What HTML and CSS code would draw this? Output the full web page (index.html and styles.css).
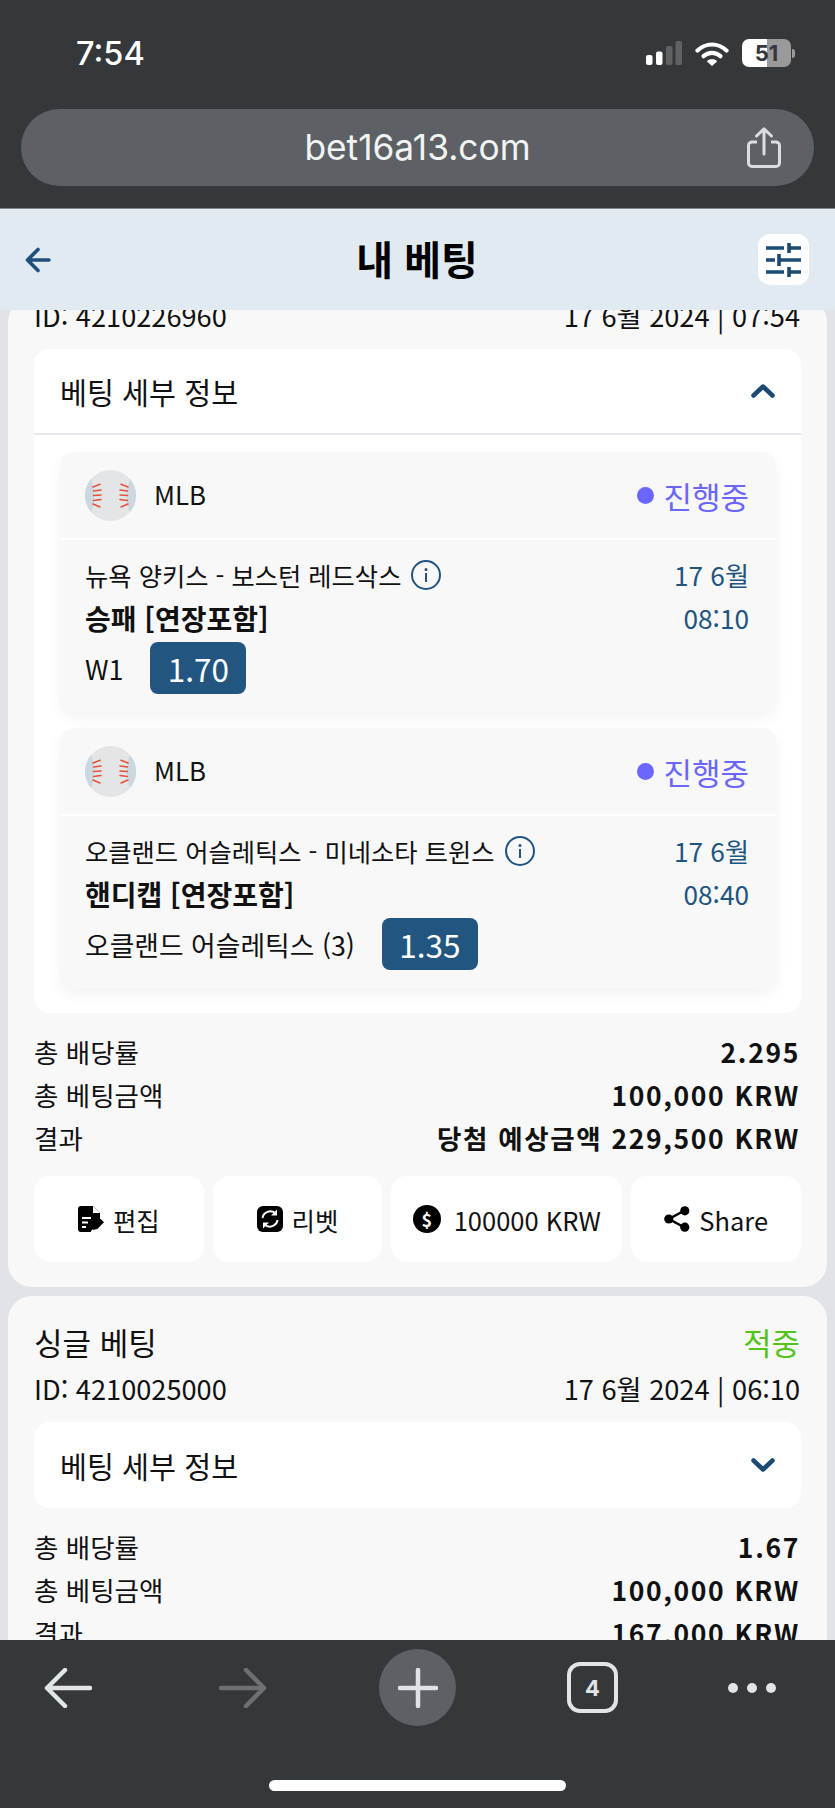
FILE: index.html
```html
<!DOCTYPE html>
<html lang="ko">
<head>
<meta charset="utf-8">
<title>내 베팅</title>
<link rel="stylesheet" href="styles.css">
</head>
<body>
<div class="phone">
  <div class="chrome">
    <div class="status">
      <span class="clock">7:54</span>
      <div class="status-icons">
        <svg class="signal" viewBox="0 0 36 24"><rect x="0" y="14" width="6.5" height="10" rx="2" fill="#fff"/><rect x="10" y="10.5" width="6.5" height="13.5" rx="2" fill="#fff"/><rect x="20" y="5" width="6.5" height="19" rx="2" fill="#5f6265"/><rect x="29.5" y="0" width="6.5" height="24" rx="2" fill="#5f6265"/></svg>
        <svg class="wifi" viewBox="0 0 34 25"><path d="M2.5 9.5C11 1.5 23 1.5 31.5 9.5" fill="none" stroke="#fff" stroke-width="4.2" stroke-linecap="round"/><path d="M8.5 15.2C13.5 10.8 20.5 10.8 25.5 15.2" fill="none" stroke="#fff" stroke-width="4.2" stroke-linecap="round"/><path d="M11.8 20.2C15 17.3 19 17.3 22.2 20.2L17 25Z" fill="#fff"/></svg>
        <div class="battery"><div class="battery-cell"><span class="battery-text">51</span></div><span class="battery-nub"></span></div>
      </div>
    </div>
    <div class="urlbar">
      <span></span>
      <span class="url">bet16a13.com</span>
      <svg class="url-share" viewBox="0 0 34 41"><path d="M10 15H5a3.5 3.5 0 0 0-3.500 3.500V36a3.500 3.500 0 0 0 3.500 3.500H29a3.500 3.500 0 0 0 3.500-3.500V18.500A3.500 3.500 0 0 0 29 15H24" fill="none" stroke="#dadddf" stroke-width="3"/><path d="M17 27V2M9.500 9L17 1.800L24.500 9" fill="none" stroke="#dadddf" stroke-width="3" stroke-linecap="round" stroke-linejoin="round"/></svg>
    </div>
  </div>

  <header class="topbar">
    <svg class="top-back" viewBox="0 0 26 26"><path d="M24 13H3M13 2.500L2.500 13L13 23.500" fill="none" stroke="#1f4f7b" stroke-width="3.600" stroke-linecap="round" stroke-linejoin="round"/></svg>
    <h1 class="page-title">내 베팅</h1>
    <div class="filter-btn">
      <svg class="filter-icon" viewBox="0 0 35 34"><path d="M0 5H18M23 5H35M23 0V10M0 17H9M13 17H35M13 11V23M0 29H18M23 29H35M23 24V34" fill="none" stroke="#1b4a76" stroke-width="3.600"/></svg>
    </div>
  </header>

  <main class="content">
    <div class="list">
      <section class="card card-cut">
        <div class="row id-row"><span>ID: 4210226960</span><span>17 6월 2024 | 07:54</span></div>
        <div class="accordion">
          <div class="acc-head acc-open">
            <span class="acc-title">베팅 세부 정보</span>
            <svg class="chev" viewBox="0 0 24 14"><path d="M2.500 11.500L12 2.500L21.500 11.500" fill="none" stroke="#1d4a72" stroke-width="4.500" stroke-linecap="round" stroke-linejoin="round"/></svg>
          </div>
          <div class="acc-body">
            <article class="bet">
              <div class="bet-head">
                <div class="league">
                  <svg class="ball" viewBox="0 0 51 51"><circle cx="25.500" cy="25.500" r="25.500" fill="#e3e5e6"/><path d="M6 9Q13 25.500 6 42A25.500 25.500 0 0 1 6 9ZM45 9Q38 25.500 45 42A25.500 25.500 0 0 0 45 9Z" fill="#ccd8df"/><path d="M8 17L15 14.300M8.500 21L16 20M8.500 25.500L16 25M8.500 30.500L16 29.500M8 34L15 37M43 17L36 14.300M42.500 21L35 20M42.500 25.500L35 25M42.500 30.500L35 29.500M43 34L36 37" fill="none" stroke="#e8503a" stroke-width="1.500" stroke-linecap="round"/></svg>
                  <span>MLB</span>
                </div>
                <div class="state"><span class="state-dot"></span><span>진행중</span></div>
              </div>
              <div class="bet-body">
                <div class="row bet-row"><span class="match">뉴욕 양키스 - 보스턴 레드삭스<svg class="info" viewBox="0 0 30 30"><circle cx="15" cy="15" r="14" fill="none" stroke="#21547f" stroke-width="2"/><circle cx="15" cy="9.500" r="1.500" fill="#21547f"/><path d="M15 13V22" stroke="#21547f" stroke-width="2"/></svg></span><span class="when">17 6월</span></div>
                <div class="row bet-row"><strong class="market">승패 [연장포함]</strong><span class="when">08:10</span></div>
                <div class="pick"><span>W1</span><span class="odds">1.70</span></div>
              </div>
            </article>
            <article class="bet">
              <div class="bet-head">
                <div class="league">
                  <svg class="ball" viewBox="0 0 51 51"><circle cx="25.500" cy="25.500" r="25.500" fill="#e3e5e6"/><path d="M6 9Q13 25.500 6 42A25.500 25.500 0 0 1 6 9ZM45 9Q38 25.500 45 42A25.500 25.500 0 0 0 45 9Z" fill="#ccd8df"/><path d="M8 17L15 14.300M8.500 21L16 20M8.500 25.500L16 25M8.500 30.500L16 29.500M8 34L15 37M43 17L36 14.300M42.500 21L35 20M42.500 25.500L35 25M42.500 30.500L35 29.500M43 34L36 37" fill="none" stroke="#e8503a" stroke-width="1.500" stroke-linecap="round"/></svg>
                  <span>MLB</span>
                </div>
                <div class="state"><span class="state-dot"></span><span>진행중</span></div>
              </div>
              <div class="bet-body">
                <div class="row bet-row"><span class="match">오클랜드 어슬레틱스 - 미네소타 트윈스<svg class="info" viewBox="0 0 30 30"><circle cx="15" cy="15" r="14" fill="none" stroke="#21547f" stroke-width="2"/><circle cx="15" cy="9.500" r="1.500" fill="#21547f"/><path d="M15 13V22" stroke="#21547f" stroke-width="2"/></svg></span><span class="when">17 6월</span></div>
                <div class="row bet-row"><strong class="market">핸디캡 [연장포함]</strong><span class="when">08:40</span></div>
                <div class="pick"><span>오클랜드 어슬레틱스 (3)</span><span class="odds">1.35</span></div>
              </div>
            </article>
          </div>
        </div>
        <dl class="totals">
          <div class="row"><dt>총 배당률</dt><dd>2.295</dd></div>
          <div class="row"><dt>총 베팅금액</dt><dd>100,000 KRW</dd></div>
          <div class="row"><dt>결과</dt><dd>당첨 예상금액 229,500 KRW</dd></div>
        </dl>
        <div class="actions">
          <div class="action">
            <svg class="act-icon" viewBox="0 0 26 26"><path d="M3 0H15L22 7V16L13 25V26H3A3 3 0 0 1 0 23V3A3 3 0 0 1 3 0Z" fill="#000"/><path d="M15 0V7H22" fill="#fff"/><path d="M4 12H13M4 16.500H10M4 21H8" stroke="#fff" stroke-width="2"/><path d="M15 24L15.800 19.500L22.500 12.800L26 16.300L19.300 23Z" fill="#000"/></svg>
            <span>편집</span>
          </div>
          <div class="action">
            <svg class="act-icon" viewBox="0 0 26 26"><rect width="26" height="26" rx="6" fill="#000"/><path d="M5.500 12A7.800 7.800 0 0 1 18.500 7.500M20.500 14A7.800 7.800 0 0 1 7.500 18.500" fill="none" stroke="#fff" stroke-width="2"/><path d="M20 3.500V9.500H14ZM6 22.500V16.500H12Z" fill="#fff"/></svg>
            <span>리벳</span>
          </div>
          <div class="action">
            <span class="coin">$</span>
            <span>100000 KRW</span>
          </div>
          <div class="action">
            <svg class="act-icon" viewBox="0 0 26 26"><path d="M20.500 4.500L5 13L20.500 21.500" fill="none" stroke="#000" stroke-width="2.500"/><circle cx="20.800" cy="4.800" r="4.600" fill="#000"/><circle cx="4.800" cy="13" r="4.600" fill="#000"/><circle cx="20.800" cy="21.200" r="4.600" fill="#000"/></svg>
            <span>Share</span>
          </div>
        </div>
      </section>

      <section class="card">
        <div class="row card-title"><span>싱글 베팅</span><span class="won">적중</span></div>
        <div class="row id-row"><span>ID: 4210025000</span><span>17 6월 2024 | 06:10</span></div>
        <div class="accordion">
          <div class="acc-head">
            <span class="acc-title">베팅 세부 정보</span>
            <svg class="chev" viewBox="0 0 24 14"><path d="M2.500 2.500L12 11.500L21.500 2.500" fill="none" stroke="#1d4a72" stroke-width="4.500" stroke-linecap="round" stroke-linejoin="round"/></svg>
          </div>
        </div>
        <dl class="totals">
          <div class="row"><dt>총 배당률</dt><dd>1.67</dd></div>
          <div class="row"><dt>총 베팅금액</dt><dd>100,000 KRW</dd></div>
          <div class="row"><dt>결과</dt><dd>167,000 KRW</dd></div>
        </dl>
      </section>
    </div>
  </main>

  <footer class="bottom">
    <div class="tools">
      <svg class="tool-arrow" viewBox="0 0 48 40"><path d="M46 20H4M21 2L3 20L21 38" fill="none" stroke="#e1e5e8" stroke-width="4.500" stroke-linecap="round" stroke-linejoin="round"/></svg>
      <svg class="tool-arrow" viewBox="0 0 48 40"><path d="M2 20H44M27 2L45 20L27 38" fill="none" stroke="#6d7073" stroke-width="4.500" stroke-linecap="round" stroke-linejoin="round"/></svg>
      <div class="plus"><svg class="plus-icon" viewBox="0 0 40 40"><path d="M20 2V38M2 20H38" fill="none" stroke="#dfe3e6" stroke-width="4.500" stroke-linecap="round"/></svg></div>
      <div class="tabs">4</div>
      <div class="dots"><span></span><span></span><span></span></div>
    </div>
    <div class="home"></div>
  </footer>
</div>
</body>
</html>
```

FILE: styles.css
```css
* { box-sizing: border-box; }
html, body { margin: 0; padding: 0; }
body {
  width: 835px;
  height: 1808px;
  overflow: hidden;
  font-family: "Noto Sans CJK KR", "Noto Sans", sans-serif;
  color: #111;
}
.phone { display: flex; flex-direction: column; height: 1808px; background: #e0e4e9; }

.chrome { height: 209px; background: #35383b; border-bottom: 1px solid #85898c; flex: none; }
.status {
  height: 109px;
  padding: 0 40px 3px 76px;
  display: flex;
  align-items: center;
  justify-content: space-between;
}
.clock { font-family: Inter, sans-serif; font-size: 32.500px; font-weight: 500; color: #fff; }
.status-icons { display: flex; align-items: center; gap: 13px; }
.signal { width: 36px; height: 24px; }
.wifi { width: 34px; height: 25px; }
.battery { display: flex; align-items: center; gap: 1px; }
.battery-cell {
  width: 49px;
  height: 28px;
  border-radius: 7px;
  background: linear-gradient(90deg, #fff 0 51%, #9a9a9a 51% 100%);
  display: flex;
  align-items: center;
  justify-content: center;
}
.battery-text { font-family: Inter, sans-serif; font-size: 22px; font-weight: 700; color: #35383b; }
.battery-nub { width: 3px; height: 9px; border-radius: 0 3px 3px 0; background: #9a9a9a; }

.urlbar {
  margin: 0 21px;
  height: 77px;
  border-radius: 39px;
  background: #5d6165;
  display: grid;
  grid-template-columns: 1fr auto 1fr;
  align-items: center;
  padding-right: 33px;
  padding-left: 33px;
}
.url { font-family: Inter, sans-serif; font-size: 35.300px; color: #f1f3f4; line-height: 1; }
.url-share { width: 34px; height: 41px; justify-self: end; }

.topbar {
  height: 101px;
  flex: none;
  background: #e1eaf1;
  padding: 0 26px 0 25px;
  display: grid;
  grid-template-columns: 1fr auto 1fr;
  align-items: center;
}
.top-back { width: 26px; height: 26px; }
.page-title { margin: 0 0 4px; font-size: 40px; font-weight: 700; color: #000; line-height: 1; }
.filter-btn {
  justify-self: end;
  width: 51px;
  height: 51px;
  border-radius: 12px;
  background: #fff;
  display: flex;
  align-items: center;
  justify-content: center;
}
.filter-icon { width: 35px; height: 34px; }

.content { flex: 1; overflow: hidden; min-height: 0; padding: 0 8px; }
.list { display: flex; flex-direction: column; gap: 9px; margin-top: -12px; }
.card {
  background: #f8f8f8;
  border-radius: 24px;
  padding: 29px 26px 25px;
  font-size: 27.200px;
  display: flex;
  flex-direction: column;
  gap: 10px;
}
.card-cut { padding-top: 0; }
.row { display: flex; align-items: center; justify-content: space-between; height: 36px; line-height: 36px; white-space: nowrap; }
.id-row { padding: 0 1px 3px 0; }
.card-title { font-size: 31px; padding-bottom: 3px; }
.won { color: #52c41a; margin-right: 1px; }

.accordion { background: #fff; border-radius: 16px; margin-top: 5px; }
.acc-head {
  height: 86px;
  padding: 0 26px;
  display: flex;
  align-items: center;
  justify-content: space-between;
}
.acc-open { border-bottom: 2px solid #e4e7eb; }
.acc-title { font-size: 29.300px; color: #111; }
.chev { width: 24px; height: 14px; }
.acc-body { padding: 17px 25px 25px 26px; display: flex; flex-direction: column; gap: 16px; }

.bet { background: #f8f8f8; border-radius: 14px; box-shadow: 0 6px 14px rgba(0, 0, 0, .05); }
.bet-head {
  height: 88px;
  padding: 0 27px 0 25px;
  display: flex;
  align-items: center;
  justify-content: space-between;
  border-bottom: 2px solid #fff;
}
.league { display: flex; align-items: center; gap: 18px; font-size: 25.800px; line-height: 1.3; }
.league span { padding-bottom: 2px; }
.ball { width: 51px; height: 51px; }
.state { display: flex; align-items: center; gap: 9px; color: #6b66ff; font-size: 31px; }
.state-dot { width: 17px; height: 17px; border-radius: 50%; background: #6b66ff; }

.bet-body { padding: 18px 27px 18px 25px; display: flex; flex-direction: column; gap: 7px; }
.bet-row { padding-bottom: 3px; }
.match { display: flex; align-items: center; gap: 10px; font-size: 25.300px; }
.info { width: 30px; height: 30px; }
.when { color: #21547f; font-size: 26.200px; }
.market { font-weight: 700; color: #111; font-size: 28px; }
.pick { display: flex; align-items: center; gap: 27px; margin-top: -2px; font-size: 26.800px; }
.odds {
  width: 96px;
  height: 52px;
  border-radius: 8px;
  background: #225681;
  color: #fff;
  font-size: 31.500px;
  display: flex;
  align-items: center;
  justify-content: center;
}

.totals { margin: 12px 0 0; display: flex; flex-direction: column; gap: 7px; font-size: 26.500px; }
.totals .row { padding-bottom: 3px; }
.totals dt { font-weight: 400; }
.totals dd { margin: 0 1px 0 0; font-weight: 700; letter-spacing: 1.650px; }

.actions { display: grid; grid-template-columns: 1fr 1fr 1.36fr 1fr; gap: 9px; margin-top: 9px; font-size: 25.500px; }
.action {
  height: 86px;
  border-radius: 16px;
  background: #fff;
  display: flex;
  align-items: center;
  justify-content: center;
  gap: 9px;
}
.act-icon { width: 26px; height: 26px; }
.coin {
  width: 28px;
  height: 28px;
  border-radius: 50%;
  background: #000;
  color: #fff;
  font-size: 18px;
  font-weight: 700;
  line-height: 28px;
  text-align: center;
  margin-right: 4px;
}

.bottom { height: 168px; flex: none; background: #35383b; padding-top: 9px; overflow: hidden; }
.tools {
  margin: 0 -20px;
  height: 77px;
  display: grid;
  grid-template-columns: repeat(5, 1fr);
  align-items: center;
  justify-items: center;
}
.tool-arrow { width: 48px; height: 40px; }
.plus {
  width: 77px;
  height: 77px;
  border-radius: 50%;
  background: #5d6165;
  display: flex;
  align-items: center;
  justify-content: center;
}
.plus-icon { width: 40px; height: 40px; }
.tabs {
  width: 51px;
  height: 51px;
  border: 4px solid #e1e5e8;
  border-radius: 13px;
  color: #e1e5e8;
  font-size: 22px;
  font-weight: 700;
  display: flex;
  align-items: center;
  justify-content: center;
  font-family: Inter, sans-serif;
}
.dots { display: flex; gap: 9px; margin-right: 32px; }
.dots span { width: 10px; height: 10px; border-radius: 50%; background: #e1e5e8; }
.home { width: 297px; height: 11px; border-radius: 6px; background: #fff; margin: 54px auto 0; }
```
